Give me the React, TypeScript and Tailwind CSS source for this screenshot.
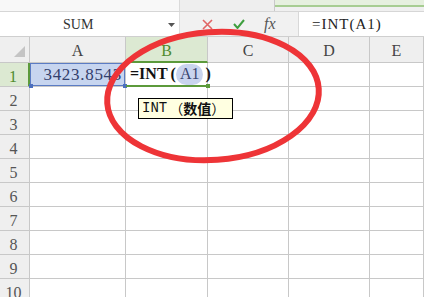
import React from 'react';

const cols = ['A', 'B', 'C', 'D', 'E'];
const rows = [1, 2, 3, 4, 5, 6, 7, 8, 9, 10];

const App: React.FC = () => {
  return (
    <div className="relative w-[424px] h-[297px] overflow-hidden bg-white font-['Liberation_Serif',serif]">
      {/* window tabs strip */}
      <div className="flex h-[12px] border-b border-[#d6d6d6]">
        <div className="w-[180px] bg-[#f8f8f8] border-r border-[#dadada]"></div>
        <div className="w-[95px] bg-[#eeeeee] border-r border-[#c9c9c9]"></div>
        <div className="flex-1 flex flex-col">
          <div className="h-[7px] bg-[#e6f0df] border-b-2 border-[#a7cd92]"></div>
          <div className="flex-1 bg-[#f0f0f0]"></div>
        </div>
      </div>

      {/* formula bar */}
      <div className="flex h-[25px] border-b border-[#cfcfcf] bg-[#f1f1f1]">
        <div className="relative w-[180px] bg-white flex items-center pl-[63px] text-[14px] text-[#333] border-r border-[#dedede]">
          SUM
          <svg className="absolute left-[168px] top-[11px]" width="7" height="4" viewBox="0 0 7 4">
            <path d="M0 0 L7 0 L3.5 4 Z" fill="#555" />
          </svg>
        </div>
        <div className="w-[118px] flex items-center">
          <svg className="ml-[22px]" width="11" height="11" viewBox="0 0 11 11">
            <path d="M1 1 L10 10 M10 1 L1 10" stroke="#e06565" strokeWidth="1.6" fill="none" />
          </svg>
          <svg className="ml-[20px]" width="12" height="10" viewBox="0 0 12 10">
            <path d="M1 5 L4.5 9 L11 1" stroke="#3f9f3f" strokeWidth="2" fill="none" />
          </svg>
          <span className="ml-[19px] italic text-[16px] text-[#555]">fx</span>
        </div>
        <div className="flex-1 bg-white border-l border-[#d8d8d8] flex items-center pl-[13px] text-[15px] tracking-[1px] text-[#222]">
          =INT(A1)
        </div>
      </div>

      {/* sheet */}
      <div className="grid grid-cols-[30px_96px_82px_81px_81px_1fr] grid-rows-[26px_repeat(10,24px)]">
        <div className="relative bg-[#efefef] border-r border-b border-[#c8c8c8]">
          <svg className="absolute left-[14px] top-[9px]" width="11" height="11" viewBox="0 0 11 11">
            <path d="M11 0 L11 11 L0 11 Z" fill="#c4c4c4" />
          </svg>
        </div>
        {cols.map((c) =>
          c === 'B' ? (
            <div key={c} className="bg-[#dce9d2] border-r border-[#c8c8c8] border-b-2 border-b-[#5c9a3b] flex items-center justify-center pt-[3px] text-[16px] text-[#4e8b2e]">
              {c}
            </div>
          ) : (
            <div key={c} className="bg-[#efefef] border-r border-b border-[#c8c8c8] flex items-center justify-center pt-[3px] text-[16px] text-[#444]">
              {c}
            </div>
          )
        )}

        {rows.map((r) => (
          <React.Fragment key={r}>
            {r === 1 ? (
              <div className="bg-[#dce9d2] border-b border-[#c8c8c8] border-r-2 border-r-[#5c9a3b] flex items-center justify-center pt-[4px] pr-[2px] text-[16px] text-[#4e8b2e]">
                {r}
              </div>
            ) : (
              <div className="bg-[#efefef] border-r border-b border-[#c8c8c8] flex items-center justify-center pt-[4px] pr-[2px] text-[16px] text-[#555]">
                {r}
              </div>
            )}
            {cols.map((c) => {
              if (r === 1 && c === 'A') {
                return (
                  <div key={c} className="relative border-r border-b border-[#c8c8c8]">
                    <div className="absolute inset-0 bg-[#c7d5ef] border border-[#5b7cc4] flex items-center justify-end pr-[2px] text-[17px] tracking-[0.7px] text-[#33406c]">
                      3423.8543
                    </div>
                    <div className="absolute left-[-1px] bottom-[-2px] w-[4px] h-[4px] bg-[#4c6fbf]"></div>
                    <div className="absolute right-[-2px] bottom-[-2px] w-[4px] h-[4px] bg-[#4c6fbf]"></div>
                  </div>
                );
              }
              if (r === 1 && c === 'B') {
                return (
                  <div key={c} className="relative border-r border-[#c8c8c8] border-b-2 border-b-[#5c9a3b] flex items-center pl-[4px] text-[16px] font-bold text-[#111]">
                    <span>=INT</span>
                    <span className="ml-[3px]">(</span>
                    <span className="h-[21px] px-[4px] rounded-full bg-[#c9d4ee] font-normal text-[#3a4670] flex items-center">A1</span>
                    <span className="ml-[2px]">)</span>
                    <div className="absolute right-[-3px] bottom-[-3px] w-[4px] h-[4px] bg-[#5c9a3b]"></div>
                  </div>
                );
              }
              return <div key={c} className="border-r border-b border-[#c8c8c8]"></div>;
            })}
          </React.Fragment>
        ))}
      </div>

      {/* function hint tooltip */}
      <div className="absolute left-[138px] top-[98px] w-[95px] h-[21px] bg-[#ffffe1] border border-black flex items-center pl-[3px] text-[14px] text-[#111]">
        <span className="font-['Liberation_Mono',monospace]">INT</span>
        <span className="ml-[2px] font-['Noto_Sans_CJK_SC',sans-serif]">（</span>
        <span className="font-['Noto_Sans_CJK_SC',sans-serif] font-bold">数值</span>
        <span className="font-['Noto_Sans_CJK_SC',sans-serif]">）</span>
      </div>

      {/* red annotation circle */}
      <svg className="absolute left-0 top-0 pointer-events-none" width="424" height="297" viewBox="0 0 424 297">
        <ellipse cx="213" cy="96" rx="106" ry="64" transform="rotate(-4 213 96)" fill="none" stroke="#ee3437" strokeWidth="6" />
      </svg>
    </div>
  );
};

export default App;
